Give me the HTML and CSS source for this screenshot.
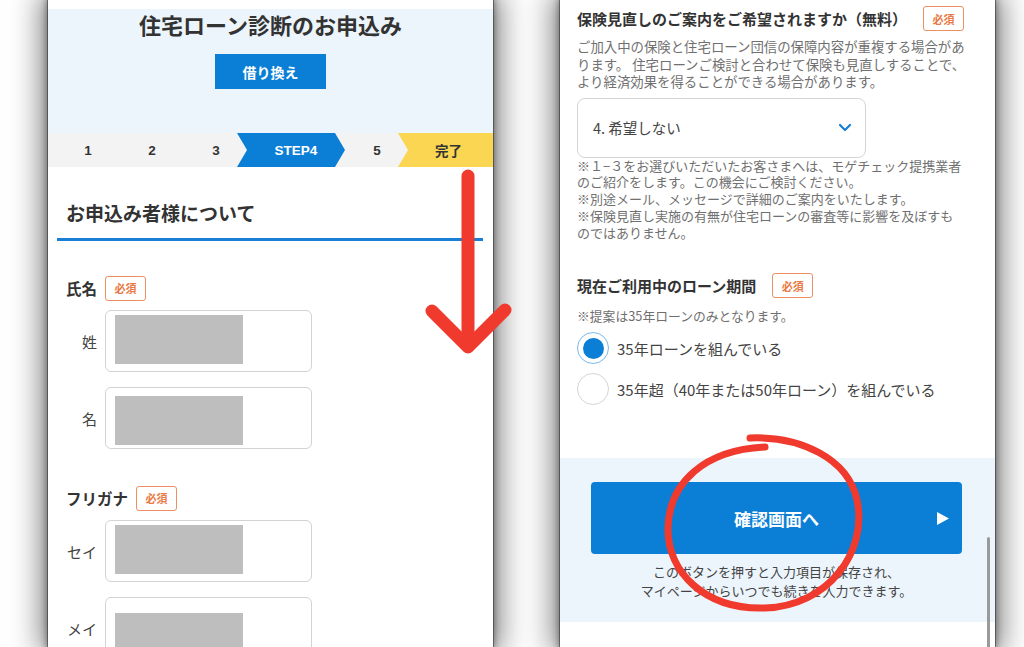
FILE: index.html
```html
<!DOCTYPE html>
<html lang="ja">
<head>
<meta charset="utf-8">
<title>住宅ローン診断のお申込み</title>
<link rel="stylesheet" href="styles.css">
</head>
<body>
<div class="stage">
  <div class="phone phone-left">
    <div class="top-strip"></div>
    <header class="hero">
      <h1>住宅ローン診断のお申込み</h1>
      <div class="type-btn">借り換え</div>
    </header>
    <nav class="steps">
      <div class="step">1</div>
      <div class="step">2</div>
      <div class="step">3</div>
      <div class="step step-current">STEP4</div>
      <div class="step">5</div>
      <div class="step step-done">完了</div>
    </nav>
    <section class="applicant">
      <h2>お申込み者様について</h2>
      <div class="field">
        <div class="label-row"><span class="label">氏名</span><span class="badge">必須</span></div>
        <div class="input-row"><span class="sub">姓</span><div class="input"><div class="mask mask-a"></div></div></div>
        <div class="input-row"><span class="sub">名</span><div class="input"><div class="mask mask-b"></div></div></div>
      </div>
      <div class="field field-kana">
        <div class="label-row"><span class="label">フリガナ</span><span class="badge">必須</span></div>
        <div class="input-row"><span class="sub">セイ</span><div class="input"><div class="mask mask-a"></div></div></div>
        <div class="input-row"><span class="sub">メイ</span><div class="input"><div class="mask mask-d"></div></div></div>
      </div>
    </section>
  </div>

  <div class="phone phone-right">
    <div class="form">
      <div class="q-row"><h3>保険見直しのご案内をご希望されますか（無料）</h3><span class="badge">必須</span></div>
      <p class="desc">ご加入中の保険と住宅ローン団信の保障内容が重複する場合があ<br>ります。 住宅ローンご検討と合わせて保険も見直しすることで、<br>より経済効果を得ることができる場合があります。</p>
      <div class="select">
        <span>4. 希望しない</span>
        <svg class="chev" width="14" height="9" viewBox="0 0 14 9"><path d="M2 2 L7 7 L12 2" fill="none" stroke="#1a7fd4" stroke-width="2.2" stroke-linecap="round" stroke-linejoin="round"/></svg>
      </div>
      <p class="notes">※１−３をお選びいただいたお客さまへは、モゲチェック提携業者<br>のご紹介をします。この機会にご検討ください。<br>※別途メール、メッセージで詳細のご案内をいたします。<br>※保険見直し実施の有無が住宅ローンの審査等に影響を及ぼすも<br>のではありません。</p>

      <div class="q-row q-loan"><h3>現在ご利用中のローン期間</h3><span class="badge">必須</span></div>
      <p class="note-small">※提案は35年ローンのみとなります。</p>
      <div class="radios">
        <label class="radio-row"><span class="radio radio-on"></span><span>35年ローンを組んでいる</span></label>
        <label class="radio-row"><span class="radio"></span><span>35年超（40年または50年ローン）を組んでいる</span></label>
      </div>
    </div>
    <section class="submit">
      <div class="confirm-btn">
        <span>確認画面へ</span>
        <svg class="play" width="12" height="13" viewBox="0 0 12 13"><polygon points="0,0 12,6.5 0,13" fill="#fff"/></svg>
      </div>
      <p class="caption">このボタンを押すと入力項目が保存され、<br>マイページからいつでも続きを入力できます。</p>
    </section>
    <div class="scrollbar"></div>
  </div>
</div>

<svg class="annotations" width="1024" height="647" viewBox="0 0 1024 647">
  <g fill="none" stroke="#f03a2d" stroke-linecap="round" stroke-linejoin="round">
    <path d="M468 176 V345" stroke-width="13"/>
    <path d="M432 311 L468 347 L505 310" stroke-width="13"/>
    <path d="M750 438 C800 436 848 458 857 500 C868 552 828 606 765 608 C705 610 667 572 668 528 C669 482 705 450 765 447" stroke-width="7"/>
  </g>
</svg>
</body>
</html>
```

FILE: styles.css
```css
* { box-sizing: border-box; margin: 0; padding: 0; }
html, body { width: 1024px; height: 647px; overflow: hidden; background: #fff; }
body {
  font-family: "Noto Sans CJK JP", "Noto Sans", sans-serif;
  color: #333;
  position: relative;
}

.stage { display: flex; gap: 67px; padding-left: 48px; height: 647px; }

.phone {
  height: 647px;
  background: #fff;
  overflow: hidden;
  position: relative;
  box-shadow: 0 0 0 1px rgba(0,0,0,0.35), 0 0 6px 2px rgba(0,0,0,0.32), 0 0 28px 7px rgba(0,0,0,0.5);
}
.phone-left { width: 445px; }
.phone-right { width: 435px; }

/* ---------- left phone ---------- */
.top-strip { height: 9px; background: #fff; }
.hero {
  height: 124px;
  background: #edf5fc;
  display: flex;
  flex-direction: column;
  align-items: center;
}
.hero h1 { font-size: 22px; line-height: 30px; font-weight: 700; color: #333; }
.type-btn {
  margin-top: 15px;
  width: 111px; height: 35px;
  background: #0b7fd6;
  color: #fff;
  font-size: 14px; font-weight: 700;
  display: flex; align-items: center; justify-content: center;
}

.steps {
  display: flex;
  height: 34px;
  background: #f3f3f3;
  padding-left: 8px;
  font-family: "Liberation Sans", "Noto Sans CJK JP", sans-serif;
  font-weight: 700;
  font-size: 13.5px;
  color: #333;
}
.step { width: 64px; display: flex; align-items: center; justify-content: center; }
.step-current {
  width: 108px;
  margin-left: -11px;
  padding-left: 10px;
  background: #0b7fd6;
  color: #fff;
  clip-path: polygon(0 0, 98px 0, 108px 50%, 98px 100%, 0 100%, 10px 50%);
}
.step-done {
  flex: 1;
  margin-left: -11px;
  padding-left: 6px;
  background: #fad652;
  font-family: "Noto Sans CJK JP", sans-serif;
  clip-path: polygon(0 0, 100% 0, 100% 100%, 0 100%, 10px 50%);
}

.applicant { padding: 0 10px 0 9px; }
.applicant h2 {
  margin-top: 33px;
  padding: 0 0 12px 9px;
  font-size: 19px; line-height: 26px; font-weight: 700;
  border-bottom: 3.5px solid #1a7fd4;
}
.field { padding-left: 9px; margin-top: 34px; }
.field-kana { margin-top: 36px; }
.label-row { display: flex; align-items: center; gap: 8px; height: 26px; }
.label { font-size: 15.5px; font-weight: 700; color: #333; }
.badge {
  width: 41px; height: 25px;
  border: 1.4px solid #ec8f62;
  border-radius: 3px;
  color: #e87a45;
  font-size: 11px; font-weight: 700;
  display: flex; align-items: center; justify-content: center;
  background: #fff;
}
.input-row { display: flex; align-items: center; margin-top: 9px; }
.input-row + .input-row { margin-top: 15px; }
.sub { width: 31px; text-align: right; font-size: 15px; color: #444; margin-right: 8px; }
.input {
  width: 207px; height: 62px;
  border: 1.5px solid #d3d3d3;
  border-radius: 6px;
  padding-left: 9px;
  display: flex; align-items: flex-start;
}
.mask { width: 128px; height: 49px; background: #bebebe; margin-top: 4px; }
.mask-b { margin-top: 8px; }
.mask-d { margin-top: 15px; }

/* ---------- right phone ---------- */
.form { padding: 6px 17px 0 17px; }
.q-row { display: flex; align-items: center; gap: 16px; height: 25px; }
.q-row h3 { font-size: 15px; font-weight: 700; color: #333; white-space: nowrap; }
.desc {
  margin-top: 7px;
  font-size: 13.4px; line-height: 17.5px;
  color: #707070;
  white-space: nowrap;
}
.select {
  margin-top: 7px;
  width: 289px; height: 60px;
  border: 1.5px solid #d5d5d5;
  border-radius: 8px;
  display: flex; align-items: center; justify-content: space-between;
  padding: 0 13px 0 15px;
  font-size: 14.5px; color: #444;
}
.notes {
  margin-top: 0;
  font-size: 13px; line-height: 16.8px;
  color: #707070;
  white-space: nowrap;
}
.q-loan { margin-top: 32px; }
.note-small { margin-top: 9px; font-size: 12.8px; line-height: 18px; color: #707070; }
.radios { margin-top: 7px; display: flex; flex-direction: column; gap: 9px; }
.radio-row { display: flex; align-items: center; gap: 8px; font-size: 15px; color: #444; height: 32px; }
.radio {
  width: 32px; height: 32px;
  border-radius: 50%;
  border: 1.5px solid #d6d6d6;
  display: flex; align-items: center; justify-content: center;
  background: #fff;
}
.radio-on { border-color: #7cb9e9; }
.radio-on::after {
  content: "";
  width: 21px; height: 21px;
  border-radius: 50%;
  background: #0b7fd6;
}

.submit {
  margin-top: 53px;
  background: #edf5fc;
  padding: 24px 33px 22px 31px;
}
.confirm-btn {
  height: 72px;
  background: #0b7fd6;
  border-radius: 4px;
  display: flex; align-items: center; justify-content: center;
  position: relative;
  color: #fff;
  font-size: 17px; font-weight: 700;
}
.play { position: absolute; right: 13px; top: 30px; }
.caption {
  margin-top: 8px;
  text-align: center;
  font-size: 13px; line-height: 19px;
  color: #444;
}
.scrollbar {
  position: absolute;
  right: 5px; top: 537px;
  width: 3px; height: 120px;
  border-radius: 2px;
  background: #9a9a9a;
}

/* ---------- annotations overlay ---------- */
.annotations { position: absolute; left: 0; top: 0; pointer-events: none; }
```
